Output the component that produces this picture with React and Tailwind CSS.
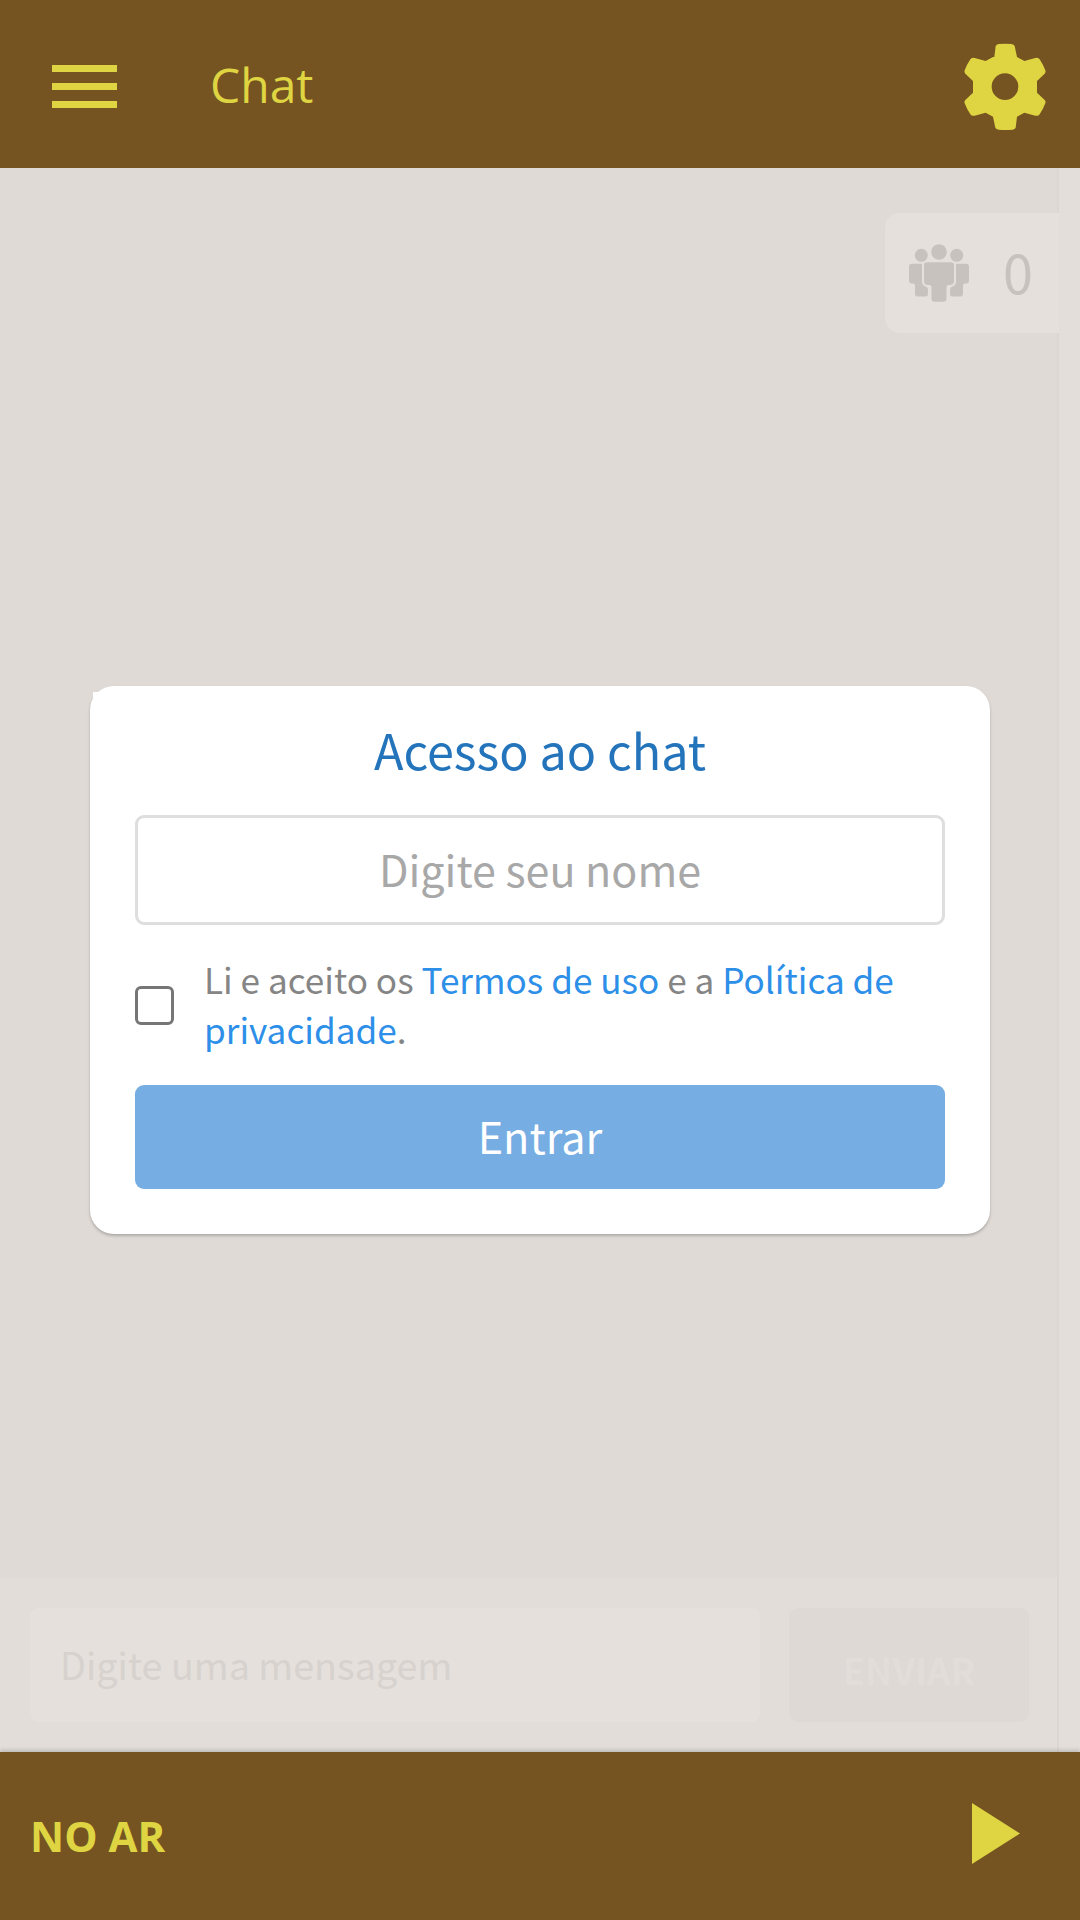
const sourceLike = "font-['Noto_Sans_CJK_JP',sans-serif]";

function PeopleIcon() {
  return (
    <svg width="60" height="58" viewBox="0 0 60 58" fill="#c7c2be" className="shrink-0">
      <circle cx="30" cy="8" r="7.8" />
      <circle cx="12.3" cy="11.3" r="6.5" />
      <circle cx="47.7" cy="11.3" r="6.5" />
      <path d="M18 18.300h24a3 3 0 0 1 3 3v15.700a4 4 0 0 1-4 4h-1.500a2 2 0 0 0-2 2v11.500a3.200 3.200 0 0 1-3.200 3.200h-8.600a3.200 3.200 0 0 1-3.200-3.200v-11.500a2 2 0 0 0-2-2h-1.500a4 4 0 0 1-4-4v-15.700a3 3 0 0 1 3-3z" />
      <path d="M3 19.700h10.300q-.3.800-.3 2v15.800a5.300 5.300 0 0 0 3.500 5q2.700.8 2.400 3.500v4a2.500 2.500 0 0 1-2.500 2.500h-7.600a2.800 2.800 0 0 1-2.800-2.800v-8.200a2 2 0 0 0-2-2h-1a3 3 0 0 1-3-3v-13.800a3 3 0 0 1 3-3z" />
      <path d="M57 19.700h-10.300q.3.800.3 2v15.800a5.300 5.300 0 0 1-3.500 5q-2.700.8-2.400 3.500v4a2.500 2.500 0 0 0 2.500 2.500h7.600a2.800 2.800 0 0 0 2.800-2.800v-8.200a2 2 0 0 1 2-2h1a3 3 0 0 0 3-3v-13.800a3 3 0 0 0-3-3z" />
    </svg>
  );
}

function GearIcon() {
  return (
    <svg width="100" height="100" viewBox="0 0 300 300" fill="currentColor" className="ml-auto mt-[2px] shrink-0">
      <path
        fillRule="evenodd"
        d="M118 66 122 33Q124 28 131 27Q150 25 169 27Q177 28 179 33L186 66 208 78 241 69Q250 67 254 73Q265 90 271 106Q273 112 269 116L246 138V173L269 195Q273 199 271 205Q265 221 254 238Q250 244 241 242L208 233 186 245 182 278Q180 283 173 284Q150 286 131 284Q123 283 121 278L114 245 92 233 59 242Q50 244 46 238Q35 221 29 205Q27 199 31 195L54 173V138L31 116Q27 112 29 106Q35 90 46 73Q50 67 59 69L92 78 114 66ZM150 115a40 40 0 1 0 0 80a40 40 0 1 0 0-80Z"
      />
    </svg>
  );
}

function Header() {
  return (
    <header className="flex h-[168px] items-center bg-[#755421] pl-[52px] pr-[25px] text-[#dfd441]">
      <button className="mt-[5px] flex w-[65px] flex-col gap-[11px]" aria-label="Menu">
        <span className="h-[7px] bg-[#dfd441]" />
        <span className="h-[7px] bg-[#dfd441]" />
        <span className="h-[7px] bg-[#dfd441]" />
      </button>
      <h1 className="ml-[93px] mt-px font-['Open_Sans','Noto_Sans',sans-serif] text-[48px] leading-none">Chat</h1>
      <GearIcon />
    </header>
  );
}

function AccessCard() {
  return (
    <section className="w-[900px] rounded-[24px] bg-white px-[45px] pb-[45px] shadow-[0_2px_3px_rgba(0,0,0,0.22)]">
      <h2 className="flex h-[129px] items-center justify-center pb-[3px] text-[48.5px] leading-none text-[#2374bb]">
        Acesso ao chat
      </h2>
      <div className="flex h-[110px] items-center justify-center rounded-[9px] border-[3px] border-[#dedede] pb-[4px] text-[43px] leading-none text-[#a8a8a8]">
        Digite seu nome
      </div>
      <div className="flex h-[160px] items-center gap-[30px]">
        <span className="size-[39px] shrink-0 rounded-[6px] border-[3px] border-[#767676]" />
        <p className="-mt-[3px] text-[35.15px] leading-[50px] text-[#858585]">
          Li e aceito os <span className="text-[#2d8fe8]">Termos de uso</span> e a{" "}
          <span className="text-[#2d8fe8]">Política de privacidade</span>.
        </p>
      </div>
      <button className="flex h-[104px] w-full items-center justify-center rounded-[9px] bg-[#76ade3] pb-[2px] text-[43.2px] leading-none text-white">
        Entrar
      </button>
    </section>
  );
}

function Composer() {
  return (
    <div className="flex h-[174px] gap-[29px] bg-[#e2ddd9] pl-[30px] pr-[28px] pt-[30px]">
      <div className="flex h-[114px] w-[730px] shrink-0 items-center rounded-[8px] bg-[#e5e0dc] pb-[3px] pl-[30px] text-[37.7px] leading-none text-[#d7d2ce]">
        Digite uma mensagem
      </div>
      <div className="flex h-[114px] w-[240px] shrink-0 items-center justify-center rounded-[9px] bg-[#ded9d5] pt-[11px] text-[36.5px] font-bold leading-none text-[#e2ddd9]">
        ENVIAR
      </div>
    </div>
  );
}

export default function App() {
  return (
    <div className={"flex h-[1920px] w-[1080px] flex-col overflow-hidden bg-[#e3deda] " + sourceLike}>
      <Header />
      <main className="relative flex flex-1">
        <div className="flex w-[1059px] flex-col border-r-2 border-[#dcd7d3] bg-[#dfdad6]">
          <div className="mt-[45px] -mr-[2px] flex h-[120px] w-[174px] items-center self-end rounded-l-[15px] bg-[#e5e0dc] pl-[24px] text-[54px] leading-none text-[#c7c2be]">
            <PeopleIcon />
            <span className="-mt-[5px] ml-[34px]">0</span>
          </div>
          <div className="mt-auto">
            <Composer />
          </div>
        </div>
        <div className="absolute left-[90px] top-[518px]">
          <span className="absolute left-[3px] top-[6px] size-[12px] bg-white" />
          <AccessCard />
        </div>
      </main>
      <footer className="relative flex h-[168px] items-center bg-[#755421] pl-[30px] pr-[60px] font-['Open_Sans','Noto_Sans',sans-serif] text-[#dfd441] shadow-[0_-2px_4px_rgba(0,0,0,0.16)]">
        <span className="text-[42px] font-bold leading-none">NO AR</span>
        <svg width="48" height="61" viewBox="0 0 48 61" className="-mt-[5px] ml-auto" fill="currentColor">
          <path d="M0 0 48 30.500 0 61z" />
        </svg>
      </footer>
    </div>
  );
}
